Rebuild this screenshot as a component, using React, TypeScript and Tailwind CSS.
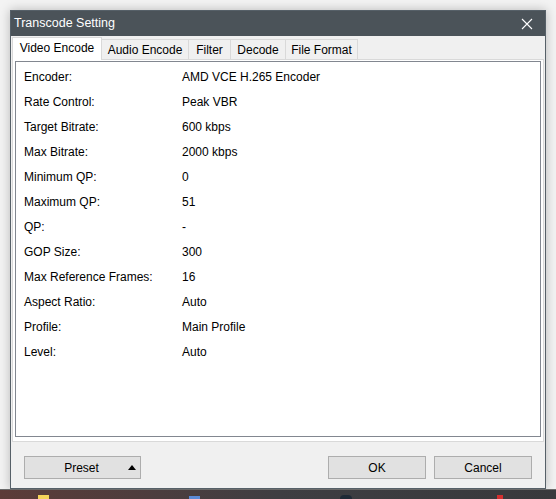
import React from 'react';

const rows: [string, string][] = [
  ['Encoder:', 'AMD VCE H.265 Encoder'],
  ['Rate Control:', 'Peak VBR'],
  ['Target Bitrate:', '600 kbps'],
  ['Max Bitrate:', '2000 kbps'],
  ['Minimum QP:', '0'],
  ['Maximum QP:', '51'],
  ['QP:', '-'],
  ['GOP Size:', '300'],
  ['Max Reference Frames:', '16'],
  ['Aspect Ratio:', 'Auto'],
  ['Profile:', 'Main Profile'],
  ['Level:', 'Auto'],
];

const tabs = [
  { label: 'Video Encode', w: 'w-[90px]', active: true },
  { label: 'Audio Encode', w: 'w-[87px]' },
  { label: 'Filter', w: 'w-[42px]' },
  { label: 'Decode', w: 'w-[55px]' },
  { label: 'File Format', w: 'w-[72px]' },
];

export default function App() {
  return (
    <div
      className="w-[556px] h-[499px] bg-[#f3f3f3] flex flex-col overflow-hidden text-black text-[12px]"
      style={{ fontFamily: '"Liberation Sans", Arial, sans-serif' }}
    >
      {/* Dialog window */}
      <div className="ml-[10px] mt-[10px] w-[536px] h-[479px] border border-[#566068] bg-[#f0f0f0] flex flex-col shadow-[0_0_10px_rgba(0,0,0,0.25)]">
        {/* Title bar */}
        <div className="h-[25px] bg-[#4b5359] flex items-center justify-between pl-[3px] pr-[12px]">
          <span className="text-white text-[12.5px] leading-none">Transcode Setting</span>
          <svg width="12" height="12" viewBox="0 0 12 12" className="text-white">
            <path d="M1 1L11 11M11 1L1 11" stroke="currentColor" strokeWidth="1.1" />
          </svg>
        </div>

        {/* Tabs */}
        <div className="mt-[1px] pl-[1px] flex items-end h-[22px] relative z-10">
          {tabs.map((t, i) =>
            t.active ? (
              <div
                key={t.label}
                className={`${t.w} h-[23px] -mb-px bg-white border border-b-0 border-[#d9d9d9] flex items-center justify-center pb-[2px]`}
              >
                {t.label}
              </div>
            ) : (
              <div
                key={t.label}
                className={`${t.w} h-[20px] bg-[#f0f0f0] border-t border-r border-[#d9d9d9] ${i === 0 ? 'border-l' : ''} flex items-center justify-center`}
              >
                {t.label}
              </div>
            ),
          )}
        </div>

        {/* Tab page */}
        <div className="ml-[1px] w-[532px] h-[383px] bg-white border border-[#d9d9d9] pt-[1px] px-[2px] pb-[4px] flex">
          <div className="flex-1 border border-[#828790] bg-white pt-[2px] pl-[8px]">
            {rows.map(([label, value]) => (
              <div key={label} className="flex items-center h-[25px]">
                <span className="w-[158px]">{label}</span>
                <span>{value}</span>
              </div>
            ))}
          </div>
        </div>

        {/* Buttons */}
        <div className="flex items-center mt-[14px] px-[13px]">
          <button className="w-[117px] h-[23px] bg-[#e1e1e1] border border-[#adadad] flex items-center">
            <span className="flex-1 text-center pl-[10px]">Preset</span>
            <svg width="8" height="5" viewBox="0 0 8 5" className="mr-[4px]">
              <path d="M0 5L4 0L8 5Z" fill="#000" />
            </svg>
          </button>
          <div className="flex-1" />
          <button className="w-[98px] h-[23px] bg-[#e1e1e1] border border-[#adadad]">OK</button>
          <button className="ml-[8px] w-[98px] h-[23px] bg-[#e1e1e1] border border-[#adadad]">Cancel</button>
        </div>
      </div>

      {/* Taskbar strip */}
      <div className="mt-auto h-[10px] bg-gradient-to-r from-[#5c3b38] via-[#3e3e42] to-[#38393c] flex items-end border-t border-[#6b6b6b]">
        <div className="ml-[38px] w-[11px] h-[4px] bg-[#f5d35a]" />
        <div className="ml-[140px] w-[11px] h-[3px] bg-[#5a8ad6]" />
        <div className="ml-[140px] w-[12px] h-[4px] rounded-t-full bg-[#1f2a36]" />
        <div className="ml-[145px] w-[6px] h-[4px] bg-[#d32f2f]" />
      </div>
    </div>
  );
}
